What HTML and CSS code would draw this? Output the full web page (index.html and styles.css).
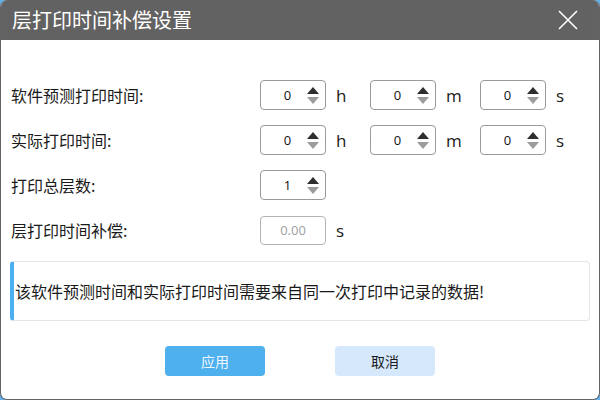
FILE: index.html
```html
<!DOCTYPE html>
<html lang="zh">
<head>
<meta charset="utf-8">
<link rel="stylesheet" href="styles.css">
</head>
<body>
<div class="window">
  <div class="titlebar">
    <span class="title">层打印时间补偿设置</span>
    <svg class="close" width="20" height="20" viewBox="0 0 20 20"><path d="M1 1 L19 19 M19 1 L1 19" stroke="#fff" stroke-width="1.6" fill="none"/></svg>
  </div>
  <div class="content">
    <div class="form">
      <div class="label">软件预测打印时间:</div>
      <div class="spin"><span class="val">0</span><span class="arrows"><i class="up"></i><i class="down"></i></span></div><div class="unit">h</div>
      <div class="spin"><span class="val">0</span><span class="arrows"><i class="up"></i><i class="down"></i></span></div><div class="unit">m</div>
      <div class="spin"><span class="val">0</span><span class="arrows"><i class="up"></i><i class="down"></i></span></div><div class="unit">s</div>

      <div class="label">实际打印时间:</div>
      <div class="spin"><span class="val">0</span><span class="arrows"><i class="up"></i><i class="down"></i></span></div><div class="unit">h</div>
      <div class="spin"><span class="val">0</span><span class="arrows"><i class="up"></i><i class="down"></i></span></div><div class="unit">m</div>
      <div class="spin"><span class="val">0</span><span class="arrows"><i class="up"></i><i class="down"></i></span></div><div class="unit">s</div>

      <div class="label">打印总层数:</div>
      <div class="spin"><span class="val">1</span><span class="arrows"><i class="up"></i><i class="down"></i></span></div>
      <div class="filler5"></div>

      <div class="label">层打印时间补偿:</div>
      <div class="field">0.00</div><div class="unit">s</div>
      <div class="filler4"></div>
    </div>
    <div class="notice">该软件预测时间和实际打印时间需要来自同一次打印中记录的数据!</div>
    <div class="buttons">
      <button class="btn primary">应用</button>
      <button class="btn secondary">取消</button>
    </div>
  </div>
</div>
</body>
</html>
```
FILE: styles.css
```css
html, body {
  margin: 0;
  padding: 0;
  background: #62b1ea;
}
body {
  width: 600px;
  height: 400px;
  overflow: hidden;
  font-family: "Noto Sans CJK SC", "Noto Sans", sans-serif;
}
.window {
  width: 600px;
  height: 400px;
  box-sizing: border-box;
  border: 1px solid #646464;
  border-top: none;
  border-radius: 7px;
  overflow: hidden;
  background: #fff;
  display: flex;
  flex-direction: column;
}
.titlebar {
  height: 40px;
  flex: none;
  background: #626262;
  display: flex;
  align-items: center;
  justify-content: space-between;
  padding: 0 21px 0 11px;
}
.title {
  color: #fff;
  font-size: 20px;
  line-height: 40px;
}
.close {
  display: block;
}
.content {
  padding: 40px 9px 0 9px;
  display: flex;
  flex-direction: column;
}
.form {
  display: grid;
  grid-template-columns: 250px 66px 44px 66px 44px 66px 44px;
  grid-auto-rows: 30px;
  row-gap: 15px;
  align-items: center;
}
.label {
  font-size: 16px;
  color: #1a1a1a;
  padding-left: 1px;
}
.unit {
  font-size: 17px;
  color: #1a1a1a;
  padding-left: 10px;
  font-family: "Open Sans", "Noto Sans", sans-serif;
}
.filler5 { grid-column: span 5; }
.filler4 { grid-column: span 4; }
.spin {
  height: 30px;
  box-sizing: border-box;
  border: 1px solid #9a9a9a;
  border-radius: 4px;
  display: flex;
  align-items: center;
}
.val {
  flex: 1;
  text-align: center;
  font-size: 13px;
  color: #111;
  padding-left: 8px;
  font-family: "Open Sans", "Noto Sans", sans-serif;
}
.arrows {
  width: 14px;
  margin-right: 5px;
  display: flex;
  flex-direction: column;
  align-items: center;
  gap: 3px;
}
.arrows i {
  display: block;
  width: 0;
  height: 0;
  border-left: 6px solid transparent;
  border-right: 6px solid transparent;
}
.arrows .up { border-bottom: 7px solid #2e2e2e; }
.arrows .down { border-top: 7px solid #9c9c9c; }
.field {
  height: 29px;
  box-sizing: border-box;
  border: 1px solid #b4b4b4;
  border-radius: 4px;
  display: flex;
  align-items: center;
  justify-content: center;
  font-size: 13px;
  color: #a0a0a0;
  font-family: "Open Sans", "Noto Sans", sans-serif;
}
.notice {
  margin-top: 16px;
  height: 60px;
  box-sizing: border-box;
  border: 1px solid #e6e6e6;
  border-left: 4px solid #4caff0;
  border-radius: 4px;
  display: flex;
  align-items: center;
  padding-left: 1px;
  font-size: 16px;
  color: #1a1a1a;
}
.buttons {
  margin-top: 25px;
  display: flex;
  justify-content: center;
  gap: 70px;
}
.btn {
  width: 100px;
  height: 30px;
  border: none;
  border-radius: 4px;
  font-family: "Noto Sans CJK SC", sans-serif;
  font-size: 14px;
  padding: 0;
}
.primary {
  background: #4fb0ee;
  color: #eef7ff;
}
.secondary {
  background: #d6e9fc;
  color: #1a1a1a;
}
```
